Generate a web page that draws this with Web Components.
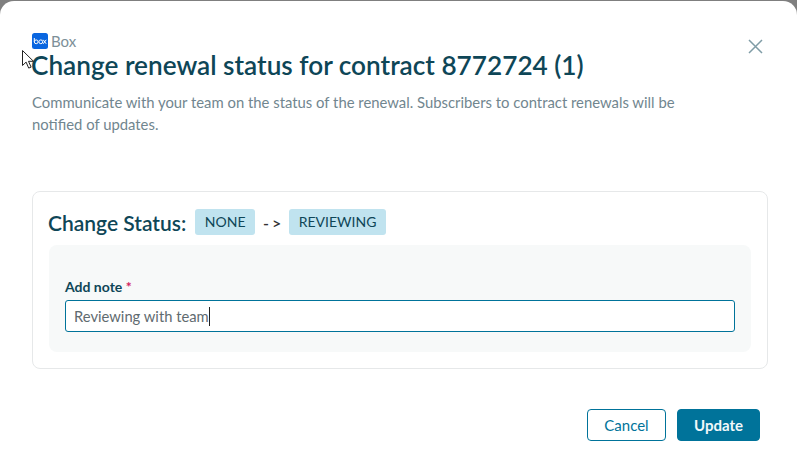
<!DOCTYPE html>
<html>
<head>
<meta charset="utf-8">
<title>Change renewal status</title>
<style>
html, body { margin: 0; height: 100%; background: #7f7f7f; overflow: hidden; }
body { font-family: Lato, "Liberation Sans", sans-serif; }
</style>
</head>
<body>
<renewal-dialog>
	<span slot="source">Box</span>
	<span slot="title">Change renewal status for contract 8772724 (1)</span>
	<span slot="desc">Communicate with your team on the status of the renewal. Subscribers to contract renewals will be notified of updates.</span>
	<status-card from="NONE" to="REVIEWING" note="Reviewing with team"></status-card>
	<dialog-button slot="actions" kind="outline">Cancel</dialog-button>
	<dialog-button slot="actions" kind="solid">Update</dialog-button>
</renewal-dialog>

<script>
(function() {
	let dialogTemplate = document.createElement("template");
	dialogTemplate.innerHTML = `
		<style>
		:host {
			display: flex;
			flex-direction: column;
			position: relative;
			box-sizing: border-box;
			width: 797px;
			height: 467px;
			margin-top: 1px;
			padding: 32px 29px 0 32px;
			background: #fff;
			border-radius: 14px 14px 0 0;
			overflow: hidden;
		}
		.source {
			display: flex;
			align-items: center;
			gap: 3px;
			height: 16px;
			font-size: 15px;
			line-height: 16px;
			color: #7d8f98;
		}
		.title {
			margin-left: -1px;
			font-size: 26.2px;
			line-height: 32px;
			font-weight: 600;
			color: #0e4657;
		}
		.desc {
			width: 670px;
			margin-top: 10px;
			font-size: 14.85px;
			line-height: 22px;
			color: #71868f;
		}
		.content { margin-top: 56px; }
		.actions {
			display: flex;
			justify-content: flex-end;
			gap: 11px;
			margin-top: 40px;
			padding-right: 8px;
		}
		.close {
			position: absolute;
			top: 38px;
			right: 34px;
			width: 15px;
			height: 15px;
		}
		.cursor {
			position: absolute;
			left: 22px;
			top: 49px;
		}
		</style>
		<div class="source">
			<svg width="16" height="16" viewBox="0 0 16 16">
				<rect width="16" height="16" rx="2.5" fill="#0a66e0"/>
				<g fill="none" stroke="#fff" stroke-width="1">
					<circle cx="4.2" cy="8.8" r="1.9"/>
					<circle cx="8.8" cy="8.8" r="1.9"/>
					<path d="M2.3 5v3.8M11.2 6.8l3 4M14.2 6.8l-3 4"/>
				</g>
			</svg>
			<slot name="source"></slot>
		</div>
		<div class="title"><slot name="title"></slot></div>
		<div class="desc"><slot name="desc"></slot></div>
		<div class="content"><slot></slot></div>
		<div class="actions"><slot name="actions"></slot></div>
		<svg class="close" viewBox="0 0 15 15" fill="none" stroke="#7f9ca6" stroke-width="1.5">
			<path d="M1 1l13 13M14 1L1 14"/>
		</svg>
		<svg class="cursor" width="14" height="20" viewBox="0 0 14 20">
			<path d="M.5.5v15l3.6-3.4 2.6 6 2.4-1-2.6-5.8h5z" fill="#fff" stroke="#222" stroke-width="1"/>
		</svg>
	`;

	class RenewalDialog extends HTMLElement {
		constructor() {
			super();
			this._shadowRoot = this.attachShadow({mode: "open"});
			this._shadowRoot.appendChild(dialogTemplate.content.cloneNode(true));
		}
	}

	let cardTemplate = document.createElement("template");
	cardTemplate.innerHTML = `
		<style>
		:host {
			display: block;
			box-sizing: border-box;
			height: 178px;
			padding: 16px 16px 16px;
			border: 1px solid #e6e8e9;
			border-radius: 8px;
			background: #fff;
		}
		.head {
			display: flex;
			align-items: center;
			height: 28px;
			margin-left: -1px;
			font-size: 21px;
			font-weight: 600;
			color: #0e4657;
		}
		.pill {
			display: block;
			padding: 0 9.5px;
			height: 26px;
			line-height: 26px;
			font-size: 14px;
			font-weight: 400;
			color: #0e4657;
			background: #c0e3ef;
			border-radius: 3px;
		}
		.from { margin-left: 9px; }
		.arrow { margin: 0 5px 0 8px; font-size: 16px; color: #333; letter-spacing: 3px; }
		.well {
			box-sizing: border-box;
			height: 107px;
			margin-top: 9px;
			padding: 33px 16px 0;
			background: #f7f9f9;
			border-radius: 8px;
		}
		label {
			display: block;
			height: 17px;
			font-size: 14px;
			line-height: 17px;
			font-weight: 700;
			color: #0e4657;
		}
		label span { color: #d3205c; }
		.field {
			display: flex;
			align-items: center;
			box-sizing: border-box;
			height: 32px;
			margin-top: 5px;
			padding: 0 8px;
			background: #fff;
			border: 1px solid #00739a;
			border-radius: 3px;
			font-size: 14.75px;
			color: #5f6b70;
		}
		.caret { width: 1px; height: 19px; background: #222; }
		</style>
		<div class="head">
			Change Status:
			<span class="pill from" id="from"></span>
			<span class="arrow">-&gt;</span>
			<span class="pill" id="to"></span>
		</div>
		<div class="well">
			<label>Add note <span>*</span></label>
			<div class="field"><span id="note"></span><i class="caret"></i></div>
		</div>
	`;

	class StatusCard extends HTMLElement {
		constructor() {
			super();
			this._shadowRoot = this.attachShadow({mode: "open"});
			this._shadowRoot.appendChild(cardTemplate.content.cloneNode(true));
		}

		connectedCallback() {
			this._shadowRoot.getElementById("from").textContent = this.getAttribute("from");
			this._shadowRoot.getElementById("to").textContent = this.getAttribute("to");
			this._shadowRoot.getElementById("note").textContent = this.getAttribute("note");
		}
	}

	let buttonTemplate = document.createElement("template");
	buttonTemplate.innerHTML = `
		<style>
		:host {
			display: flex;
			align-items: center;
			justify-content: center;
			box-sizing: border-box;
			height: 32px;
			border: 1px solid #00739a;
			border-radius: 4px;
			font-size: 15px;
		}
		:host([kind="outline"]) { width: 79px; color: #00739a; background: #fff; }
		:host([kind="solid"]) { width: 83px; color: #f2f8fa; background: #00739a; font-weight: 700; }
		</style>
		<slot></slot>
	`;

	class DialogButton extends HTMLElement {
		constructor() {
			super();
			this._shadowRoot = this.attachShadow({mode: "open"});
			this._shadowRoot.appendChild(buttonTemplate.content.cloneNode(true));
		}
	}

	customElements.define("renewal-dialog", RenewalDialog);
	customElements.define("status-card", StatusCard);
	customElements.define("dialog-button", DialogButton);
})();
</script>
</body>
</html>
